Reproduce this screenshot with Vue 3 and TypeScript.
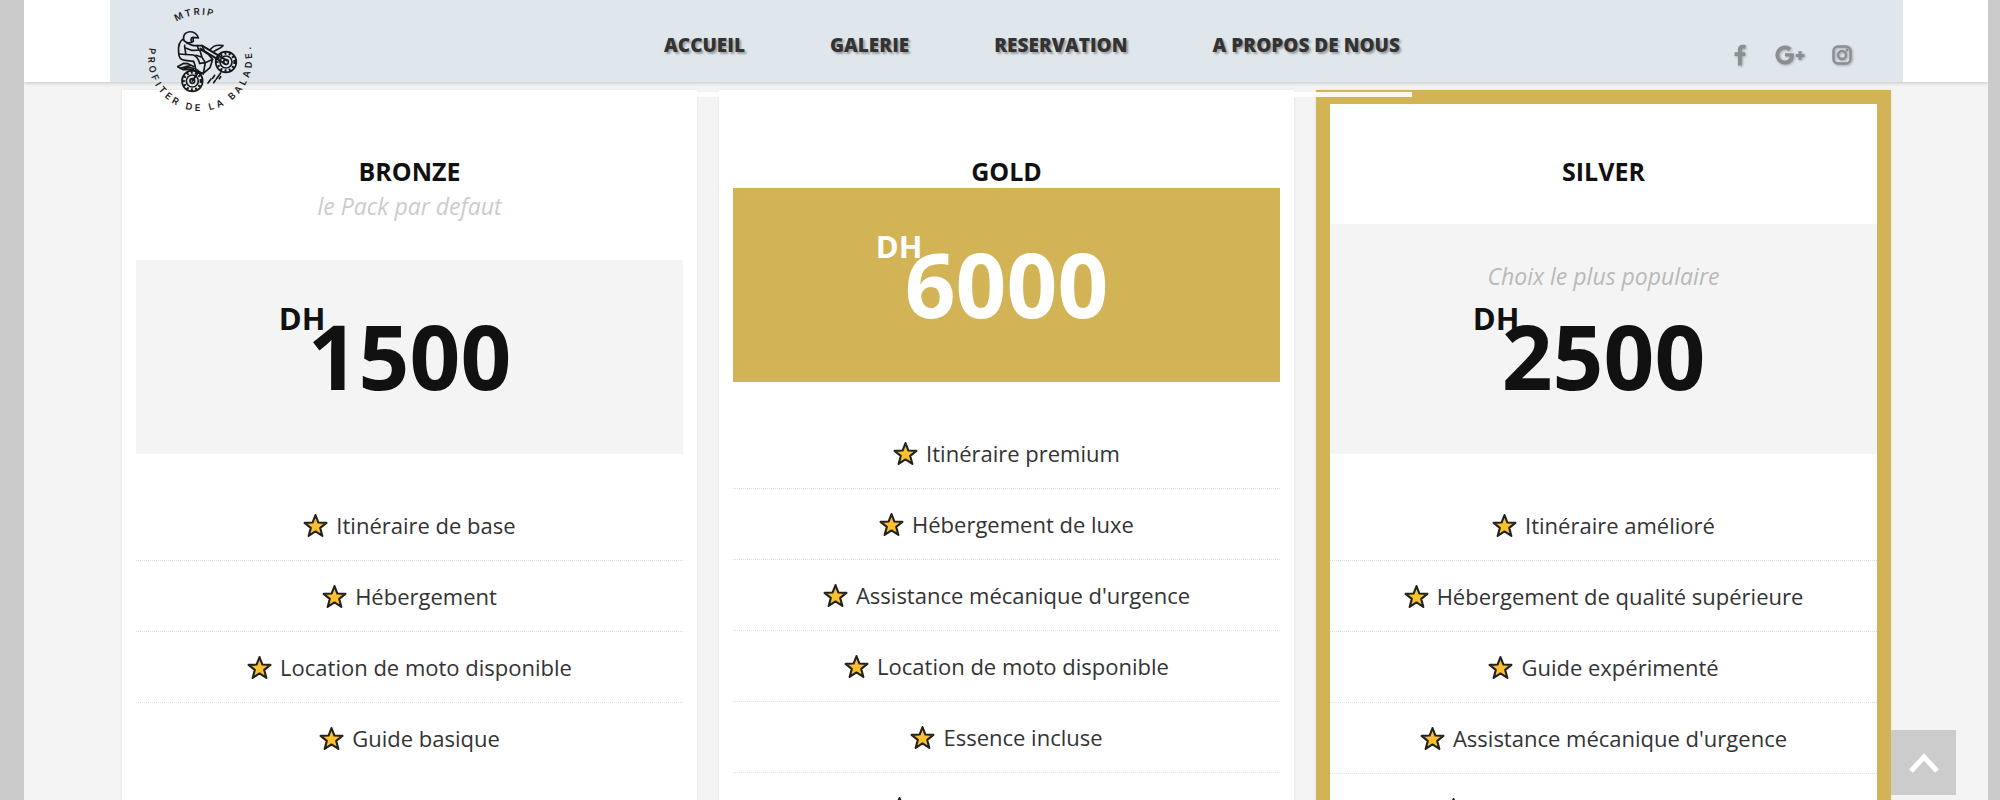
<script setup lang="ts">
interface Pack {
  name: string
  price: string
  tagline?: string
  taglineInPanel?: boolean
  variant: 'plain' | 'gold' | 'framed'
  features: string[]
}

const links: string[] = ['Accueil', 'Galerie', 'Reservation', 'A propos de nous']

const packs: Pack[] = [
  {
    name: 'Bronze',
    price: '1500',
    tagline: 'le Pack par defaut',
    variant: 'plain',
    features: ['Itinéraire de base', 'Hébergement', 'Location de moto disponible', 'Guide basique'],
  },
  {
    name: 'Gold',
    price: '6000',
    variant: 'gold',
    features: [
      'Itinéraire premium',
      'Hébergement de luxe',
      "Assistance mécanique d'urgence",
      'Location de moto disponible',
      'Essence incluse',
      'Guide professionnel',
    ],
  },
  {
    name: 'Silver',
    price: '2500',
    tagline: 'Choix le plus populaire',
    taglineInPanel: true,
    variant: 'framed',
    features: [
      'Itinéraire amélioré',
      'Hébergement de qualité supérieure',
      'Guide expérimenté',
      "Assistance mécanique d'urgence",
      'Location de moto disponible',
    ],
  },
]
</script>

<template>
  <div class="page">
    <header class="header">
      <div class="bar">
        <a class="logo" href="#" aria-label="MTRIP">
          <svg viewBox="0 0 420 360" width="140" height="120">
            <defs>
              <path id="arc-top" d="M78 177 A133 133 0 1 1 344 177" />
              <path id="arc-bottom" d="M81 90 A156 156 0 1 0 340 90" />
            </defs>
            <g class="logo-text">
              <text class="tight"><textPath href="#arc-top" startOffset="46%" text-anchor="middle">MTRIP</textPath></text>
              <text><textPath href="#arc-bottom" startOffset="51%" text-anchor="middle">PROFITER DE LA BALADE.</textPath></text>
            </g>
            <g class="ink">
              <path d="M162 122C156 100 174 93 187 96C197 99 203 107 205 114L189 112C182 113 181 123 187 125C180 131 168 129 162 122Z" />
              <path d="M189 113L190 124L184 127" />
              <path d="M160 117C147 124 144 138 146 158C146 174 152 180 166 181L190 184" />
              <path d="M170 129C178 132 184 136 192 137L216 137L222 150L184 151L167 144" />
              <path d="M164 136C163 146 168 153 167 163" />
              <path d="M147 162L190 165C200 168 206 180 209 190" />
              <path d="M190 184C196 192 196 203 198 215L220 222" />
              <path d="M202 137L206 150" />
              <path d="M216 137L290 181M211 146L284 191" class="heavy" />
              <path d="M216 151L236 164L248 178L240 203L220 220L199 214M210 152L216 172L198 166M216 172L226 188L248 178M226 188L220 220M209 190L226 188" />
              <path d="M240 150C248 138 260 133 279 137C272 146 262 146 252 154" />
              <path d="M143 200L161 190L174 191L192 200M143 200L160 209L190 208M150 205L182 196" />
              <path d="M160 208C172 199 202 202 213 222" />
              <circle cx="288" cy="186" r="31" />
              <circle cx="288" cy="186" r="26" class="knobs" />
              <circle cx="288" cy="186" r="18" />
              <circle cx="288" cy="186" r="7" />
              <circle cx="187" cy="243" r="31" />
              <circle cx="187" cy="243" r="26" class="knobs" />
              <circle cx="187" cy="243" r="18" />
              <circle cx="187" cy="243" r="7" />
              <path d="M187 243L203 219" class="heavy" />
              <path d="M234 249L243 237M248 235L254 226M251 248L256 241M259 237L272 219M268 236L272 230" />
            </g>
          </svg>
        </a>
        <nav class="nav" aria-label="Navigation principale">
          <a v-for="link in links" :key="link" href="#">{{ link }}</a>
        </nav>
        <div class="social">
          <a href="#" aria-label="Facebook">
            <svg viewBox="0 0 12 22" width="12" height="22">
              <path d="M11.6 1v3.500H9.600C8.300 4.500 7.900 5.100 7.900 6.100V8.200H11.500L11 12H7.900V21.500H3.900V12H.6V8.200H3.900V5.500C3.900 2.500 5.700.8 8.500.8C9.900.8 11 .9 11.600 1Z" />
            </svg>
          </a>
          <a href="#" aria-label="Google Plus">
            <svg viewBox="-1 0 30 20" width="30" height="20" overflow="visible">
              <path d="M10 8.200H18.600C20 14.500 16.300 19.500 10 19.500A9.500 9.500 0 1 1 16.500 3.100L13.700 5.900A5.600 5.600 0 1 0 10 15.600C12.900 15.600 14.500 13.800 14.900 11.600H10ZM23.400 6.300H26.600V8.900H29.400V12H26.600V14.700H23.400V12H20.800V8.900H23.400Z" />
            </svg>
          </a>
          <a href="#" aria-label="Instagram">
            <svg viewBox="0 0 20 20" width="20" height="20">
              <rect class="line" x="1.500" y="1.500" width="17" height="17" rx="4.500" />
              <circle class="line" cx="10" cy="10" r="4" />
              <circle cx="15" cy="5" r="1.400" />
            </svg>
          </a>
        </div>
      </div>
      <span class="underline"></span>
    </header>

    <main class="packs">
      <article v-for="pack in packs" :key="pack.name" class="card" :class="pack.variant">
        <div class="head">
          <h2>{{ pack.name }}</h2>
          <p v-if="pack.tagline && !pack.taglineInPanel" class="tagline">{{ pack.tagline }}</p>
        </div>
        <div class="panel">
          <p v-if="pack.taglineInPanel" class="tagline">{{ pack.tagline }}</p>
          <p class="price"><span class="currency">DH</span>{{ pack.price }}</p>
        </div>
        <ul class="features">
          <li v-for="feature in pack.features" :key="feature">
            <svg viewBox="0 0 24 24" width="25" height="25" aria-hidden="true">
              <path d="M12 2L14.800 9.200L22.500 9.500L16.500 14.300L18.600 22L12 17.700L5.400 22L7.500 14.300L1.500 9.500L9.200 9.200Z" />
            </svg>
            <span>{{ feature }}</span>
          </li>
        </ul>
      </article>
    </main>

    <button class="to-top" type="button" aria-label="Haut de page">
      <svg viewBox="0 0 32 22" width="32" height="22"><path d="M3 19L16 5L29 19" /></svg>
    </button>
  </div>
</template>

<style>
body {
  margin: 0;
  background: #cbcbcb;
}
</style>

<style scoped>
.page {
  position: relative;
  box-sizing: border-box;
  height: 100vh;
  margin: 0 12px 0 24px;
  overflow: hidden;
  background: #f4f4f4;
  font-family: "Open Sans", "Noto Sans", sans-serif;
  color: #333;
}

.header {
  position: relative;
  z-index: 2;
  height: 82px;
  padding: 0 85px 0 86px;
  background: #fff;
  box-shadow: 0 1px 4px rgba(0, 0, 0, 0.2);
}

.bar {
  display: flex;
  align-items: flex-start;
  height: 82px;
  padding: 0 51px 0 20px;
  background: #dfe6ec;
}

.logo {
  flex: none;
  height: 120px;
}

.logo svg {
  display: block;
}

.logo-text {
  font-family: Inter, sans-serif;
  font-size: 28px;
  font-weight: 600;
  letter-spacing: 10px;
  fill: #222;
}

.tight {
  letter-spacing: 6px;
}

.ink {
  fill: none;
  stroke: #16181a;
  stroke-width: 5;
  stroke-linecap: round;
  stroke-linejoin: round;
}

.heavy {
  stroke-width: 6;
}

.knobs {
  stroke-width: 8;
  stroke-linecap: butt;
  stroke-dasharray: 6 7;
}

.nav {
  display: flex;
  flex: 1;
  justify-content: center;
  gap: 85px;
  padding: 31px 0 0 60px;
}

.nav a {
  color: #333;
  font-size: 19px;
  font-weight: 800;
  line-height: 28px;
  text-decoration: none;
  text-shadow: 2px 2px 2px rgba(0, 0, 0, 0.3);
  text-transform: uppercase;
  white-space: nowrap;
}

.social {
  display: flex;
  align-items: center;
  gap: 28px;
  padding-top: 44px;
}

.social a {
  display: flex;
}

.social svg {
  fill: #8a8f92;
  filter: drop-shadow(1px 1px 1px rgba(0, 0, 0, 0.25));
}

.social .line {
  fill: none;
  stroke: #8a8f92;
  stroke-width: 2.500;
}

.underline {
  position: absolute;
  top: 92px;
  right: 576px;
  left: 564px;
  height: 5px;
  background: #fff;
  opacity: 0.9;
}

.packs {
  display: grid;
  grid-template-columns: repeat(3, 1fr);
  align-items: start;
  gap: 22px;
  padding: 8px 97px 0 98px;
}

.card {
  box-sizing: border-box;
  min-height: 760px;
  padding-top: 50px;
  border: 14px solid #fff;
  background: #fff;
  box-shadow: 0 0 3px rgba(0, 0, 0, 0.08);
  text-align: center;
}

.framed {
  border-color: #d2b356;
}

.head {
  padding-bottom: 36px;
}

.gold .head {
  padding-bottom: 0;
}

h2 {
  margin: 0;
  color: #111;
  font-size: 25px;
  font-weight: 700;
  line-height: 34px;
  text-transform: uppercase;
}

p {
  margin: 0;
}

.tagline {
  color: #ccc;
  font-size: 23px;
  font-style: italic;
  line-height: 36px;
}

.panel {
  padding: 34px 0 36px;
  background: #f4f4f4;
  color: #111;
}

.panel .tagline {
  color: #b9b9b9;
}

.gold .panel {
  background: #d2b356;
  color: #fff;
}

.price {
  position: relative;
  width: max-content;
  margin: 0 auto;
  font-size: 89px;
  font-weight: 700;
  line-height: 124px;
}

.currency {
  position: absolute;
  top: 4px;
  left: -29px;
  font-size: 31px;
  line-height: 40px;
}

.features {
  margin: 0;
  padding: 36px 0;
  list-style: none;
}

.features li {
  display: flex;
  align-items: center;
  justify-content: center;
  gap: 8px;
  height: 70px;
  border-bottom: 1px dotted #ddd;
  font-size: 22px;
  line-height: 30px;
}

.features li:last-child {
  border-bottom-color: transparent;
}

.features svg {
  fill: #fdc02f;
  stroke: #222;
  stroke-width: 2;
  stroke-linejoin: round;
}

.to-top {
  position: absolute;
  right: 32px;
  bottom: 5px;
  z-index: 3;
  display: flex;
  align-items: center;
  justify-content: center;
  width: 65px;
  height: 65px;
  padding: 0;
  border: 0;
  background: #ccc;
}

.to-top path {
  fill: none;
  stroke: #fff;
  stroke-width: 5;
}
</style>
